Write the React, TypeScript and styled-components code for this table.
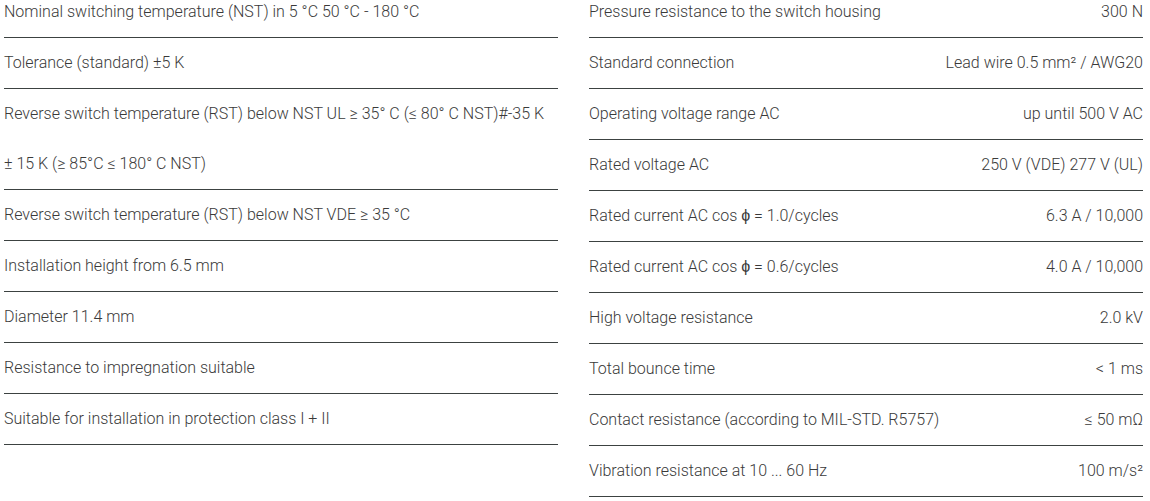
import React from "react";
import styled, {createGlobalStyle} from "styled-components";

type RowType = {
    label: string
    value?: string
}

const leftRows: Array<RowType> = [
    {label: "Nominal switching temperature (NST) in 5 °C 50 °C - 180 °C"},
    {label: "Tolerance (standard) ±5 K"},
    {label: "Reverse switch temperature (RST) below NST UL ≥ 35° C (≤ 80° C NST)#-35 K ±\u00a015 K (≥ 85°C ≤ 180° C NST)"},
    {label: "Reverse switch temperature (RST) below NST VDE ≥ 35 °C"},
    {label: "Installation height from 6.5 mm"},
    {label: "Diameter 11.4 mm"},
    {label: "Resistance to impregnation suitable"},
    {label: "Suitable for installation in protection class I + II"},
]

const rightRows: Array<RowType> = [
    {label: "Pressure resistance to the switch housing", value: "300 N"},
    {label: "Standard connection", value: "Lead wire 0.5 mm² / AWG20"},
    {label: "Operating voltage range AC", value: "up until 500 V AC"},
    {label: "Rated voltage AC", value: "250 V (VDE) 277 V (UL)"},
    {label: "Rated current AC cos ϕ = 1.0/cycles", value: "6.3 A / 10,000"},
    {label: "Rated current AC cos ϕ = 0.6/cycles", value: "4.0 A / 10,000"},
    {label: "High voltage resistance", value: "2.0 kV"},
    {label: "Total bounce time", value: "< 1 ms"},
    {label: "Contact resistance (according to MIL-STD. R5757)", value: "≤ 50 mΩ"},
    {label: "Vibration resistance at 10 ... 60 Hz", value: "100 m/s²"},
]

export default function App() {
    return (
        <>
            <GlobalStyle/>
            <Specs>
                <Column>
                    {leftRows.map((row, index) => (
                        <Row key={index}>
                            <Label>{row.label}</Label>
                        </Row>
                    ))}
                </Column>
                <Column>
                    {rightRows.map((row, index) => (
                        <Row key={index}>
                            <Label>{row.label}</Label>
                            <Value>{row.value}</Value>
                        </Row>
                    ))}
                </Column>
            </Specs>
        </>
    )
}

const GlobalStyle = createGlobalStyle`
  html, body {
    margin: 0;
    padding: 0;
    background: #ffffff;
    overflow: hidden;
  }
  body {
    font-family: Roboto, "Liberation Sans", sans-serif;
    font-weight: 300;
    color: #3a3a3a;
  }
`
const Specs = styled.div`
  display: grid;
  grid-template-columns: 554px 554px;
  column-gap: 31px;
  padding: 0 7px 0 4px;
  margin-top: -13px;
`
const Column = styled.div`
  display: flex;
  flex-direction: column;
`
const Row = styled.div`
  display: flex;
  justify-content: space-between;
  align-items: center;
  gap: 16px;
  border-bottom: 1px solid #3c4241;
  font-size: 16px;
  line-height: 50px;
`
const Label = styled.div`
  text-align: left;
`
const Value = styled.div`
  text-align: right;
  white-space: nowrap;
`
